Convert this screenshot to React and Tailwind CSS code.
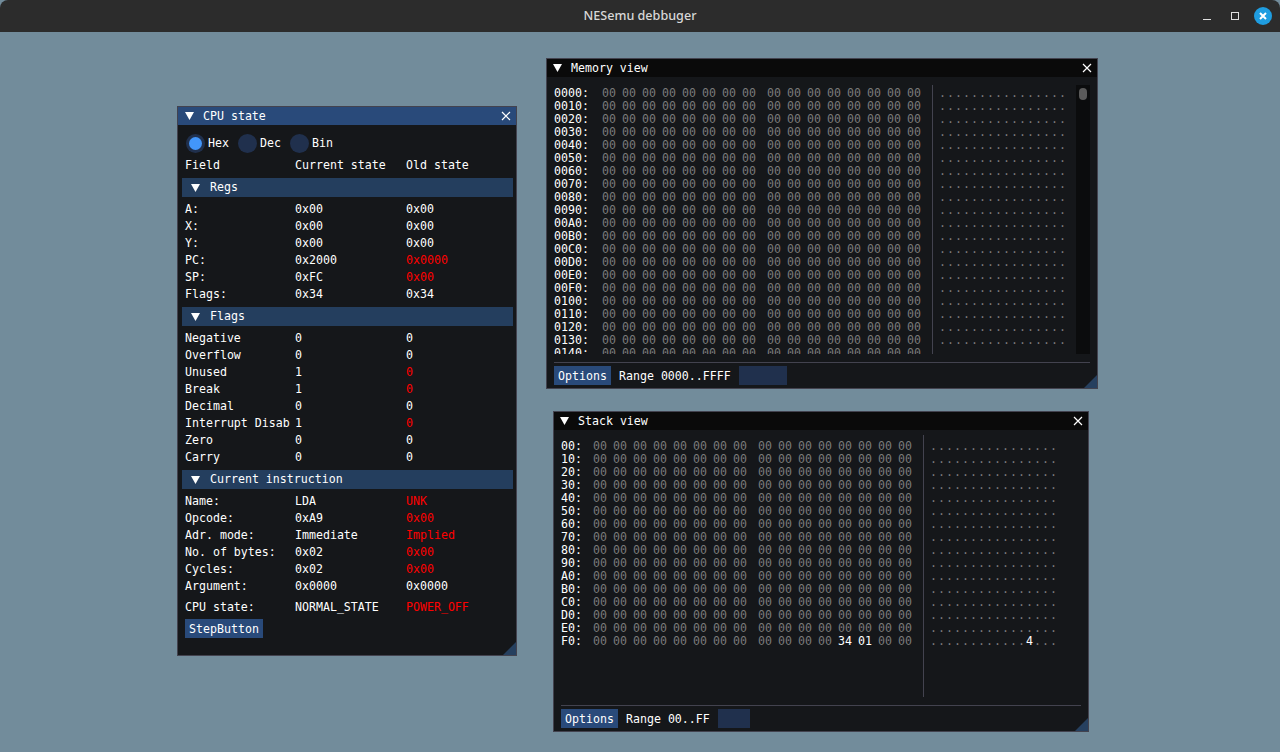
import React from "react";

const mono = "font-['DejaVu_Sans_Mono',monospace] text-[11.6px]";

const Triangle = () => (
  <svg width="9" height="8" viewBox="0 0 9 8" className="shrink-0">
    <polygon points="0,0 9,0 4.5,8" fill="#fff" />
  </svg>
);

const CloseX = () => (
  <svg width="10" height="10" viewBox="0 0 10 10" className="shrink-0">
    <path d="M1 1 L9 9 M9 1 L1 9" stroke="#fff" strokeWidth="1.2" />
  </svg>
);

const ResizeGrip = () => (
  <svg width="13" height="13" viewBox="0 0 13 13" className="absolute right-0 bottom-0">
    <polygon points="13,0 13,13 0,13" fill="#26405f" />
  </svg>
);

const ImWindow = ({ title, className, titleBg, titlePad, children }) => (
  <div className={`absolute flex flex-col border border-[#43434f] bg-[#15171a] text-white ${mono} ${className}`}>
    <div className={`flex h-[18px] shrink-0 items-center justify-between ${titleBg} ${titlePad}`}>
      <div className="flex items-center">
        <Triangle />
        <span className="ml-[9px] leading-[19px]">{title}</span>
      </div>
      <CloseX />
    </div>
    {children}
    <ResizeGrip />
  </div>
);

const Row = ({ label, cur, old, oldRed, className = "h-[17px]" }) => (
  <div className={`flex items-center pl-[7px] leading-[17px] ${className}`}>
    <span className="w-[110px] whitespace-nowrap">{label}</span>
    <span className="w-[111px] whitespace-nowrap">{cur}</span>
    <span className={oldRed ? "text-[#ff0000]" : ""}>{old}</span>
  </div>
);

const Section = ({ title, className = "" }) => (
  <div className={`ml-[4px] mr-[3px] flex h-[19px] shrink-0 items-center bg-[#243e5e] pl-[9px] ${className}`}>
    <Triangle />
    <span className="ml-[10px] leading-[19px]">{title}</span>
  </div>
);

const Radio = ({ label, active }) => (
  <div className="flex items-center">
    <div className="flex h-[19px] w-[19px] items-center justify-center rounded-full bg-[#20304d]">
      {active && <div className="h-[13px] w-[13px] rounded-full bg-[#4296fa]" />}
    </div>
    <span className="ml-[3px] w-[30px] leading-[19px]">{label}</span>
  </div>
);

const regs = [
  ["A:", "0x00", "0x00", false],
  ["X:", "0x00", "0x00", false],
  ["Y:", "0x00", "0x00", false],
  ["PC:", "0x2000", "0x0000", true],
  ["SP:", "0xFC", "0x00", true],
  ["Flags:", "0x34", "0x34", false],
];

const flags = [
  ["Negative", "0", "0", false],
  ["Overflow", "0", "0", false],
  ["Unused", "1", "0", true],
  ["Break", "1", "0", true],
  ["Decimal", "0", "0", false],
  ["Interrupt Disab", "1", "0", true],
  ["Zero", "0", "0", false],
  ["Carry", "0", "0", false],
];

const instruction = [
  ["Name:", "LDA", "UNK", true],
  ["Opcode:", "0xA9", "0x00", true],
  ["Adr. mode:", "Immediate", "Implied", true],
  ["No. of bytes:", "0x02", "0x00", true],
  ["Cycles:", "0x02", "0x00", true],
  ["Argument:", "0x0000", "0x0000", false],
];

const renderRows = (rows) =>
  rows.map(([label, cur, old, red]) => <Row key={label} label={label} cur={cur} old={old} oldRed={red} />);

const CpuWindow = () => (
  <ImWindow
    title="CPU state"
    className="left-[177px] top-[106px] h-[550px] w-[340px]"
    titleBg="bg-[#294a7a]"
    titlePad="pl-[7px] pr-[5px]"
  >
    <div className="mt-[9px] flex h-[19px] items-center pl-[8px]">
      <Radio label="Hex" active />
      <Radio label="Dec" />
      <Radio label="Bin" />
    </div>
    <Row label="Field" cur="Current state" old="Old state" className="mt-[4px] h-[17px]" />
    <Section title="Regs" className="mt-[4px]" />
    <div className="mt-[4px]">{renderRows(regs)}</div>
    <Section title="Flags" className="mt-[4px]" />
    <div className="mt-[4px]">{renderRows(flags)}</div>
    <Section title="Current instruction" className="mt-[4px]" />
    <div className="mt-[4px]">{renderRows(instruction)}</div>
    <Row label="CPU state:" cur="NORMAL_STATE" old="POWER_OFF" oldRed className="mt-[4px] h-[17px]" />
    <button className="ml-[7px] mt-[3px] h-[19px] w-[78px] bg-[#294a7a] text-center leading-[20px]">StepButton</button>
  </ImWindow>
);

const zeros = Array.from({ length: 16 }, () => "00");

const HexRow = ({ addr, addrW, bytes = zeros }) => (
  <div className="flex h-[13px] items-center leading-[13px]">
    <span className={`shrink-0 whitespace-nowrap ${addrW}`}>{addr}:</span>
    <div className="flex shrink-0">
      {bytes.map((b, i) => (
        <span
          key={i}
          className={`shrink-0 ${i === 7 ? "w-[25px]" : "w-[20px]"} ${b === "00" ? "text-[#7a7a7a]" : "text-white"}`}
        >
          {b}
        </span>
      ))}
    </div>
  </div>
);

const AsciiRow = ({ text = "................" }) => (
  <div className="flex h-[13px] leading-[13px]">
    {text.split("").map((c, i) => (
      <span key={i} className={`w-[8px] shrink-0 ${c === "." ? "text-[#7a7a7a]" : "text-white"}`}>
        {c}
      </span>
    ))}
  </div>
);

const Footer = ({ range, boxW }) => (
  <div className="mx-[7px] mt-auto flex flex-col">
    <div className="h-px bg-[#43434f]" />
    <div className="mt-[3px] mb-[3px] flex h-[19px] items-center">
      <span className="h-[19px] w-[57px] bg-[#294a7a] text-center leading-[21px]">Options</span>
      <span className="ml-[8px] mt-[2px] whitespace-nowrap leading-[19px]">{range}</span>
      <div className={`ml-[8px] h-[19px] bg-[#20304d] ${boxW}`} />
    </div>
  </div>
);

const memRows = Array.from({ length: 21 }, (_, i) => (i * 16).toString(16).toUpperCase().padStart(4, "0"));

const MemoryWindow = () => (
  <ImWindow
    title="Memory view"
    className="left-[546px] top-[58px] h-[331px] w-[552px]"
    titleBg="bg-[#0a0a0a]"
    titlePad="pl-[6px] pr-[5px]"
  >
    {/* rows run past the bottom on purpose, the last one is cut by the scroll area */}
    <div className="mt-[8px] flex h-[269px] shrink-0 overflow-hidden pl-[7px]">
      <div className="w-[378px] shrink-0 pt-[2px]">
        {memRows.map((a) => (
          <HexRow key={a} addr={a} addrW="w-[48px]" />
        ))}
      </div>
      <div className="flex w-[144px] shrink-0">
        <div className="h-[269px] w-px shrink-0 bg-[#43434f]" />
        <div className="ml-[6px] pt-[2px]">
          {memRows.map((a) => (
            <AsciiRow key={a} />
          ))}
        </div>
      </div>
      <div className="flex h-[269px] w-[14px] shrink-0 justify-center bg-[#0b0c0d] pt-[3px]">
        <div className="h-[12px] w-[8px] rounded-[4px] bg-[#5a5a5a]" />
      </div>
    </div>
    <Footer range="Range 0000..FFFF" boxW="w-[48px]" />
  </ImWindow>
);

const stackRows = Array.from({ length: 16 }, (_, i) => (i * 16).toString(16).toUpperCase().padStart(2, "0"));
const lastBytes = zeros.map((b, i) => (i === 12 ? "34" : i === 13 ? "01" : b));

const StackWindow = () => (
  <ImWindow
    title="Stack view"
    className="left-[553px] top-[411px] h-[321px] w-[536px]"
    titleBg="bg-[#0a0a0a]"
    titlePad="pl-[6px] pr-[5px]"
  >
    <div className="flex h-[267px] shrink-0 pl-[7px] pt-[5px]">
      <div className="w-[362px] shrink-0 pt-[5px]">
        {stackRows.map((a) => (
          <HexRow key={a} addr={a} addrW="w-[32px]" bytes={a === "F0" ? lastBytes : zeros} />
        ))}
      </div>
      <div className="h-[262px] w-px shrink-0 bg-[#43434f]" />
      <div className="ml-[6px] pt-[5px]">
        {stackRows.map((a) => (
          <AsciiRow key={a} text={a === "F0" ? "............4..." : undefined} />
        ))}
      </div>
    </div>
    <Footer range="Range 00..FF" boxW="w-[32px]" />
  </ImWindow>
);

const TitleBar = () => (
  <div className="relative flex h-[32px] items-center justify-center rounded-t-[8px] bg-[#2c2c2c]">
    <span className="font-['Noto_Sans',sans-serif] text-[12.6px] font-medium text-[#d8d8d8]">NESemu debbuger</span>
    <div className="absolute right-[8px] top-0 flex h-[32px] items-center">
      <svg width="10" height="10" viewBox="0 0 10 10" className="mr-[18px]">
        <path d="M1 8.5 H9" stroke="#e0e0e0" strokeWidth="1" />
      </svg>
      <svg width="10" height="10" viewBox="0 0 10 10" className="mr-[14px]">
        <rect x="1.5" y="1.5" width="7" height="7" fill="none" stroke="#e0e0e0" strokeWidth="1" />
      </svg>
      <svg width="18" height="18" viewBox="0 0 18 18">
        <circle cx="9" cy="9" r="9" fill="#1f9de0" />
        <path d="M6 6 L12 12 M12 6 L6 12" stroke="#fff" strokeWidth="2" />
      </svg>
    </div>
  </div>
);

export default function App() {
  return (
    <div className="relative h-[752px] w-[1280px] overflow-hidden bg-[#728c9b]">
      <TitleBar />
      <CpuWindow />
      <MemoryWindow />
      <StackWindow />
    </div>
  );
}
